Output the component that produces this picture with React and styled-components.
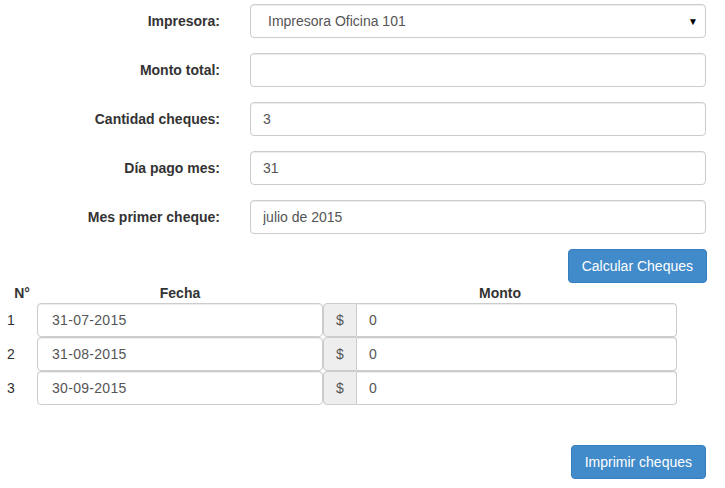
import React from 'react';
import styled, { createGlobalStyle } from 'styled-components';

const GlobalStyle = createGlobalStyle`
  body {
    margin: 0;
    background: #fff;
    font-family: "Liberation Sans", Arial, sans-serif;
    font-size: 14px;
    color: #333;
  }
`;

const cheques = [
  { id: 1, fecha: '31-07-2015', monto: '0' },
  { id: 2, fecha: '31-08-2015', monto: '0' },
  { id: 3, fecha: '30-09-2015', monto: '0' },
];

const App = () => {
  return (
    <Page>
      <GlobalStyle />
      <Form>
        <FormRow>
          <Label>Impresora:</Label>
          <SelectBox>
            <span>Impresora Oficina 101</span>
            <Caret>▼</Caret>
          </SelectBox>
        </FormRow>
        <FormRow>
          <Label>Monto total:</Label>
          <Input defaultValue="" />
        </FormRow>
        <FormRow>
          <Label>Cantidad cheques:</Label>
          <Input defaultValue="3" />
        </FormRow>
        <FormRow>
          <Label>Día pago mes:</Label>
          <Input defaultValue="31" />
        </FormRow>
        <FormRow>
          <Label>Mes primer cheque:</Label>
          <Input defaultValue="julio de 2015" />
        </FormRow>
      </Form>
      <ButtonRow>
        <Button>Calcular Cheques</Button>
      </ButtonRow>
      <Table>
        <HeadCell $num>N°</HeadCell>
        <HeadCell>Fecha</HeadCell>
        <HeadCell>Monto</HeadCell>
        {cheques.map((c) => (
          <React.Fragment key={c.id}>
            <NumCell>{c.id}</NumCell>
            <DateInput defaultValue={c.fecha} />
            <InputGroup>
              <Addon>$</Addon>
              <GroupInput defaultValue={c.monto} />
            </InputGroup>
          </React.Fragment>
        ))}
      </Table>
      <FooterRow>
        <Button>Imprimir cheques</Button>
      </FooterRow>
    </Page>
  );
};

export default App;

const Page = styled.div`
  width: 725px;
  padding-top: 4px;
`;

const Form = styled.div`
  display: flex;
  flex-direction: column;
  gap: 15px;
`;

const FormRow = styled.div`
  display: grid;
  grid-template-columns: 220px 456px;
  column-gap: 30px;
  align-items: center;
`;

const Label = styled.label`
  text-align: right;
  font-weight: bold;
  color: #333;
`;

const fieldStyle = `
  box-sizing: border-box;
  height: 34px;
  border: 1px solid #ccc;
  border-radius: 4px;
  box-shadow: inset 0 1px 1px rgba(0, 0, 0, 0.075);
  background: #fff;
  font-family: "Liberation Sans", Arial, sans-serif;
  font-size: 14px;
  color: #555;
  outline: none;
`;

const Input = styled.input`
  ${fieldStyle}
  width: 100%;
  padding: 6px 12px;
`;

const SelectBox = styled.div`
  ${fieldStyle}
  display: flex;
  align-items: center;
  justify-content: space-between;
  padding: 0 7px 0 17px;
`;

const Caret = styled.span`
  font-size: 10px;
  color: #000;
`;

const ButtonRow = styled.div`
  display: flex;
  justify-content: flex-end;
  width: 707px;
  margin-top: 15px;
`;

const FooterRow = styled.div`
  display: flex;
  justify-content: flex-end;
  width: 706px;
  margin-top: 40px;
`;

const Button = styled.button`
  height: 34px;
  padding: 6px 13px;
  background: #428bca;
  border: 1px solid #357ebd;
  border-radius: 4px;
  color: #fff;
  font-family: "Liberation Sans", Arial, sans-serif;
  font-size: 14px;
  cursor: pointer;
`;

const Table = styled.div`
  display: grid;
  grid-template-columns: 37px 286px 354px;
  grid-auto-rows: 34px;
  grid-template-rows: 20px;
`;

const HeadCell = styled.div`
  font-weight: bold;
  text-align: center;
  line-height: 20px;
  padding-left: ${(p) => (p.$num ? '7px' : '0')};
`;

const NumCell = styled.div`
  display: flex;
  align-items: center;
  padding-left: 7px;
`;

const DateInput = styled.input`
  ${fieldStyle}
  width: 100%;
  padding: 6px 14px;
  letter-spacing: 0.3px;
`;

const InputGroup = styled.div`
  display: flex;
`;

const Addon = styled.span`
  box-sizing: border-box;
  width: 34px;
  height: 34px;
  display: flex;
  align-items: center;
  justify-content: center;
  background: #eee;
  border: 1px solid #ccc;
  border-radius: 4px 0 0 4px;
  color: #555;
`;

const GroupInput = styled.input`
  ${fieldStyle}
  flex: 1;
  min-width: 0;
  padding: 6px 12px;
  border-left: 0;
  border-radius: 0 4px 4px 0;
`;
